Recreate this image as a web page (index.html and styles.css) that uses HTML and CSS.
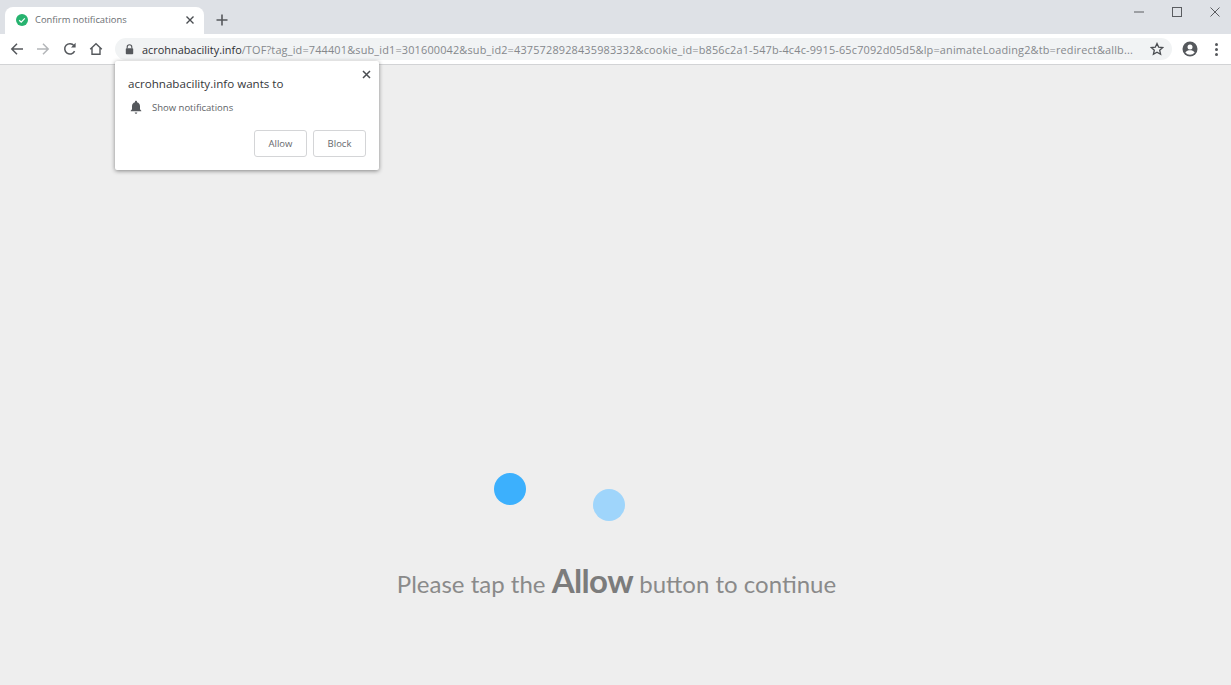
FILE: index.html
```html
<!DOCTYPE html>
<html lang="en">
<head>
  <meta charset="UTF-8" />
  <meta name="viewport" content="width=device-width, initial-scale=1.0"/>
  <title>Confirm notifications</title>
  <link rel="stylesheet" href="styles.css">
</head>
<body>
  <!-- Tab strip -->
  <div class="tabstrip">
    <div class="tab">
      <svg class="favicon" width="14" height="14" viewBox="0 0 14 14">
        <circle cx="7" cy="7" r="6" fill="#27b36f"/>
        <path d="M4.2 7.2l2 1.9 3.6-3.8" fill="none" stroke="#fff" stroke-width="1.2"/>
      </svg>
      <span class="tab-title">Confirm notifications</span>
      <svg class="tab-close" width="10" height="10" viewBox="0 0 10 10">
        <path d="M1.5 1.5l7 7M8.5 1.5l-7 7" stroke="#4a4d51" stroke-width="1.4"/>
      </svg>
    </div>
    <svg class="new-tab" width="12" height="12" viewBox="0 0 12 12">
      <path d="M6 .5v11M.5 6h11" stroke="#55585c" stroke-width="1.6"/>
    </svg>
    <div class="window-buttons">
      <svg width="10" height="10" viewBox="0 0 10 10"><path d="M0 5h10" stroke="#5a5c60" stroke-width="1"/></svg>
      <svg width="10" height="10" viewBox="0 0 10 10"><rect x=".5" y=".5" width="9" height="9" fill="none" stroke="#5a5c60"/></svg>
      <svg width="10" height="10" viewBox="0 0 10 10"><path d="M.5 .5l9 9M9.5 .5l-9 9" stroke="#5a5c60"/></svg>
    </div>
  </div>

  <!-- Toolbar -->
  <div class="toolbar">
    <div class="nav-buttons">
      <svg width="14" height="14" viewBox="0 0 14 14"><path d="M13 7H2M7 1.8L1.8 7 7 12.2" fill="none" stroke="#55585c" stroke-width="1.5"/></svg>
      <svg width="14" height="14" viewBox="0 0 14 14"><path d="M1 7h11M7 1.8L12.2 7 7 12.2" fill="none" stroke="#b4b6b9" stroke-width="1.5"/></svg>
      <svg width="14" height="14" viewBox="0 0 14 14"><path d="M11.6 9.2A5.2 5.2 0 1 1 11 3.6" fill="none" stroke="#55585c" stroke-width="1.5"/><path d="M12.6 .8v4.6H8z" fill="#55585c"/></svg>
      <svg width="14" height="14" viewBox="0 0 14 14"><path d="M1.2 7.2L7 1.8l5.800 5.400M3 6v6.300h8V6" fill="none" stroke="#55585c" stroke-width="1.400"/></svg>
    </div>
    <div class="omnibox">
      <svg class="lock" width="9" height="11" viewBox="0 0 9 11">
        <path d="M2.200 4.500V3a2.300 2.300 0 0 1 4.600 0v1.500" fill="none" stroke="#55585c" stroke-width="1.100"/>
        <rect x=".8" y="4.300" width="7.400" height="6" rx=".8" fill="#55585c"/>
      </svg>
      <span class="url"><span class="url-host">acrohnabacility.info</span>/TOF?tag_id=744401&amp;sub_id1=301600042&amp;sub_id2=4375728928435983332&amp;cookie_id=b856c2a1-547b-4c4c-9915-65c7092d05d5&amp;lp=animateLoading2&amp;tb=redirect&amp;allb...</span>
      <svg class="star" width="14" height="14" viewBox="0 0 14 14">
        <path d="M7 1.500l1.700 3.700 4 .4-3 2.700.9 4L7 10.200l-3.600 2.100.9-4-3-2.700 4-.4z" fill="none" stroke="#4a4d51" stroke-width="1.300"/>
      </svg>
    </div>
    <svg class="avatar" width="16" height="16" viewBox="0 0 16 16">
      <circle cx="8" cy="8" r="7.500" fill="#55585c"/>
      <circle cx="8" cy="6" r="2.500" fill="#fff"/>
      <path d="M3.300 11.500c1-1.700 3-2.300 4.700-2.300s3.700.6 4.700 2.300A6 6 0 0 1 8 13.800a6 6 0 0 1-4.700-2.300z" fill="#fff"/>
    </svg>
    <div class="menu-dots"><i></i><i></i><i></i></div>
  </div>

  <!-- Permission prompt -->
  <div class="prompt">
    <svg class="prompt-close" width="9" height="9" viewBox="0 0 9 9">
      <path d="M1 1l7 7M8 1L1 8" stroke="#4a4d51" stroke-width="1.500"/>
    </svg>
    <p class="prompt-title">acrohnabacility.info wants to</p>
    <div class="prompt-row">
      <svg width="12" height="14" viewBox="0 0 12 14">
        <path d="M6 .8c.6 0 1 .4 1 1v.5c1.900.5 3 2 3 4v3l1.300 1.400v.6H.7v-.6L2 9.300v-3c0-2 1.100-3.500 3-4v-.5c0-.6.400-1 1-1zM4.700 12.500h2.600a1.300 1.300 0 0 1-2.600 0z" fill="#55585c"/>
      </svg>
      <span>Show notifications</span>
    </div>
    <div class="prompt-buttons">
      <button>Allow</button>
      <button>Block</button>
    </div>
  </div>

  <!-- Page content -->
  <div class="page">
    <div class="loader">
      <div class="dot"></div>
      <div class="dot dot-light"></div>
    </div>
    <p class="message">Please tap the <strong>Allow</strong> button to continue</p>
  </div>
</body>
</html>
```

FILE: styles.css
```css
* {
  box-sizing: border-box;
}

html, body {
  height: 100%;
}

body {
  margin: 0;
  display: flex;
  flex-direction: column;
  overflow: hidden;
  background: #eeeeee;
  font-family: "Open Sans", "Noto Sans", Arial, sans-serif;
}

.tabstrip {
  height: 34px;
  flex: none;
  display: flex;
  align-items: flex-end;
  background: #dee1e6;
  position: relative;
}

.tab {
  width: 199px;
  height: 27px;
  margin-left: 5px;
  padding: 0 9px 2px 10px;
  display: flex;
  align-items: center;
  background: #fff;
  border-radius: 8px 8px 0 0;
}

.favicon {
  flex: none;
}

.tab-title {
  margin-left: 6px;
  flex: 1;
  font-size: 9.400px;
  color: #6a6e72;
  white-space: nowrap;
}

.new-tab {
  margin: 0 0 8px 12px;
}

.window-buttons {
  margin-left: auto;
  align-self: flex-start;
  display: flex;
  gap: 28px;
  padding: 7px 11px 0 0;
}

.toolbar {
  height: 31px;
  flex: none;
  display: flex;
  align-items: center;
  background: #fff;
  border-bottom: 1px solid #d2d3d5;
}

.nav-buttons {
  display: flex;
  gap: 12.500px;
  padding-left: 9.500px;
  width: 115px;
}

.omnibox {
  width: 1057px;
  height: 22px;
  display: flex;
  align-items: center;
  padding: 0 8px 0 10px;
  background: #f1f3f4;
  border-radius: 11px;
}

.lock {
  flex: none;
}

.url {
  flex: 1;
  margin-left: 8px;
  font-size: 10.900px;
  letter-spacing: 0.170px;
  color: #85888c;
  white-space: nowrap;
  overflow: hidden;
}

.url-host {
  letter-spacing: 0;
  color: #2e3033;
}

.star {
  flex: none;
  margin-left: 10px;
}

.avatar {
  margin-left: 10px;
  flex: none;
}

.menu-dots {
  margin-left: 17px;
  display: flex;
  flex-direction: column;
  gap: 2px;
}

.menu-dots i {
  width: 3px;
  height: 3px;
  border-radius: 50%;
  background: #55585c;
}

.prompt {
  position: absolute;
  left: 115px;
  top: 61px;
  width: 264px;
  height: 109px;
  padding: 14px 13px 0;
  background: #fff;
  border-radius: 2px;
  box-shadow: 0 1px 4px rgba(0, 0, 0, 0.45);
}

.prompt-close {
  position: absolute;
  top: 9px;
  right: 8px;
}

.prompt-title {
  margin: 0;
  font-size: 11.600px;
  line-height: 17px;
  color: #36383b;
}

.prompt-row {
  margin-top: 8px;
  display: flex;
  align-items: center;
  gap: 10px;
  padding-left: 2px;
  font-size: 9.500px;
  color: #606367;
}

.prompt-buttons {
  margin-top: 16px;
  display: flex;
  justify-content: flex-end;
  gap: 6px;
}

button {
  width: 53px;
  height: 27px;
  padding: 0;
  border: 1px solid #d4d5d7;
  border-radius: 3px;
  background: #fff;
  font-family: inherit;
  font-size: 9.500px;
  font-weight: 500;
  color: #66696d;
}

.page {
  flex: 1;
  display: flex;
  flex-direction: column;
  align-items: center;
}

.loader {
  margin: 408px 113px 0 0;
  height: 48px;
  display: flex;
  gap: 67px;
}

.dot {
  width: 32px;
  height: 32px;
  border-radius: 50%;
  background: #3cb0fd;
}

.dot-light {
  margin-top: 16px;
  background: #9fd5fb;
}

.message {
  margin: 35px 0 0 2px;
  font-family: Lato, "Open Sans", Arial, sans-serif;
  font-size: 24px;
  line-height: 48px;
  color: #8a8a8a;
  white-space: nowrap;
}

.message strong {
  font-size: 33px;
  letter-spacing: -0.600px;
  color: #7c7c7c;
}
```
